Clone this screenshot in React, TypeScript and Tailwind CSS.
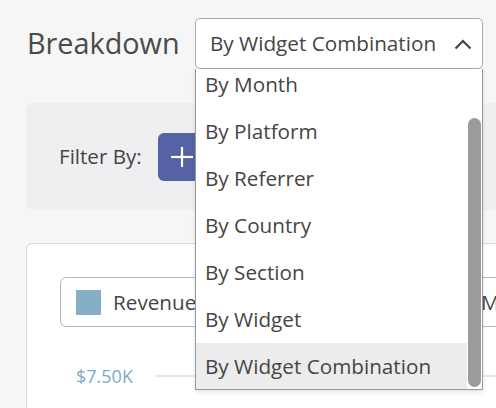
import React from "react";

const items = [
  "By Month",
  "By Platform",
  "By Referrer",
  "By Country",
  "By Section",
  "By Widget",
  "By Widget Combination",
];

export default function App() {
  return (
    <div
      className="w-[496px] h-[408px] overflow-hidden bg-[#f6f6f7] text-[#454545]"
      style={{ fontFamily: '"Open Sans", "Noto Sans", sans-serif' }}
    >
      <div className="w-[720px] pl-[26px] pt-[18px]">
        {/* Header */}
        <div className="flex items-center h-[51px]">
          <div className="w-[169px] pl-[1px] text-[28.8px] leading-none text-[#4a4a4a]">Breakdown</div>
          <div className="relative z-10">
            <div className="w-[288px] h-[51px] bg-white border border-[#a8a8a8] rounded-[5px] flex items-center justify-between pl-[14px] pr-[10px]">
              <span className="text-[20.7px] leading-none">By Widget Combination</span>
              <svg width="18" height="11" viewBox="0 0 18 11" className="mt-[2px]">
                <polyline points="1.5,9.5 9,2 16.5,9.5" fill="none" stroke="#454545" strokeWidth="2.2" />
              </svg>
            </div>
            <div className="absolute left-0 top-[51px] w-[288px] h-[321px] bg-white border-x border-b border-[#9a9a9a] shadow-[0_2px_4px_rgba(0,0,0,0.12)] overflow-hidden">
              <div className="mr-[15px] -mt-[8px]">
                {items.map((it, i) => (
                  <div
                    key={it}
                    className={
                      "h-[47px] flex items-center pl-[9px] text-[20.7px] leading-none " +
                      (i === items.length - 1 ? "bg-[#ececec]" : "")
                    }
                  >
                    {it}
                  </div>
                ))}
              </div>
              <div className="absolute right-[1px] top-[49px] w-[13px] h-[269px] rounded-full bg-[#9b9b9b]" />
            </div>
          </div>
        </div>

        {/* Filter panel */}
        <div className="mt-[34px] h-[107px] rounded-[8px] bg-[#efeff2] flex items-center pl-[33px]">
          <span className="text-[20.6px] leading-none">Filter By:</span>
          <div className="ml-[16px] w-[48px] h-[48px] rounded-[6px] bg-[#5563a6] flex items-center justify-center">
            <svg width="24" height="24" viewBox="0 0 24 24">
              <line x1="12" y1="2" x2="12" y2="22" stroke="white" strokeWidth="2.2" />
              <line x1="1" y1="12" x2="23" y2="12" stroke="white" strokeWidth="2.2" />
            </svg>
          </div>
        </div>

        {/* Card */}
        <div className="mt-[33px] h-[300px] bg-white border border-[#dadada] rounded-[6px] pt-[33px] pl-[33px]">
          <div className="flex items-center">
            <div className="w-[350px] h-[50px] border border-[#b8b8b8] rounded-[6px] flex items-center pl-[15px] gap-[12px]">
              <div className="w-[25px] h-[25px] bg-[#86afc7]" />
              <span className="text-[20.7px] leading-none">Revenue</span>
            </div>
            <div className="ml-[18px] w-[200px] h-[50px] border border-[#b8b8b8] rounded-[6px] flex items-center pl-[15px] gap-[12px]">
              <div className="w-[25px] h-[25px] bg-[#e3a86b]" />
              <span className="text-[20.7px] leading-none">Margin</span>
            </div>
          </div>
          <div className="mt-[37px] flex items-center pl-[16px]">
            <span className="w-[79px] text-[18px] leading-[24px] text-[#80aac5]">$7.50K</span>
            <div className="flex-1 h-[2px] bg-[#e6e6e6]" />
          </div>
        </div>
      </div>
    </div>
  );
}
